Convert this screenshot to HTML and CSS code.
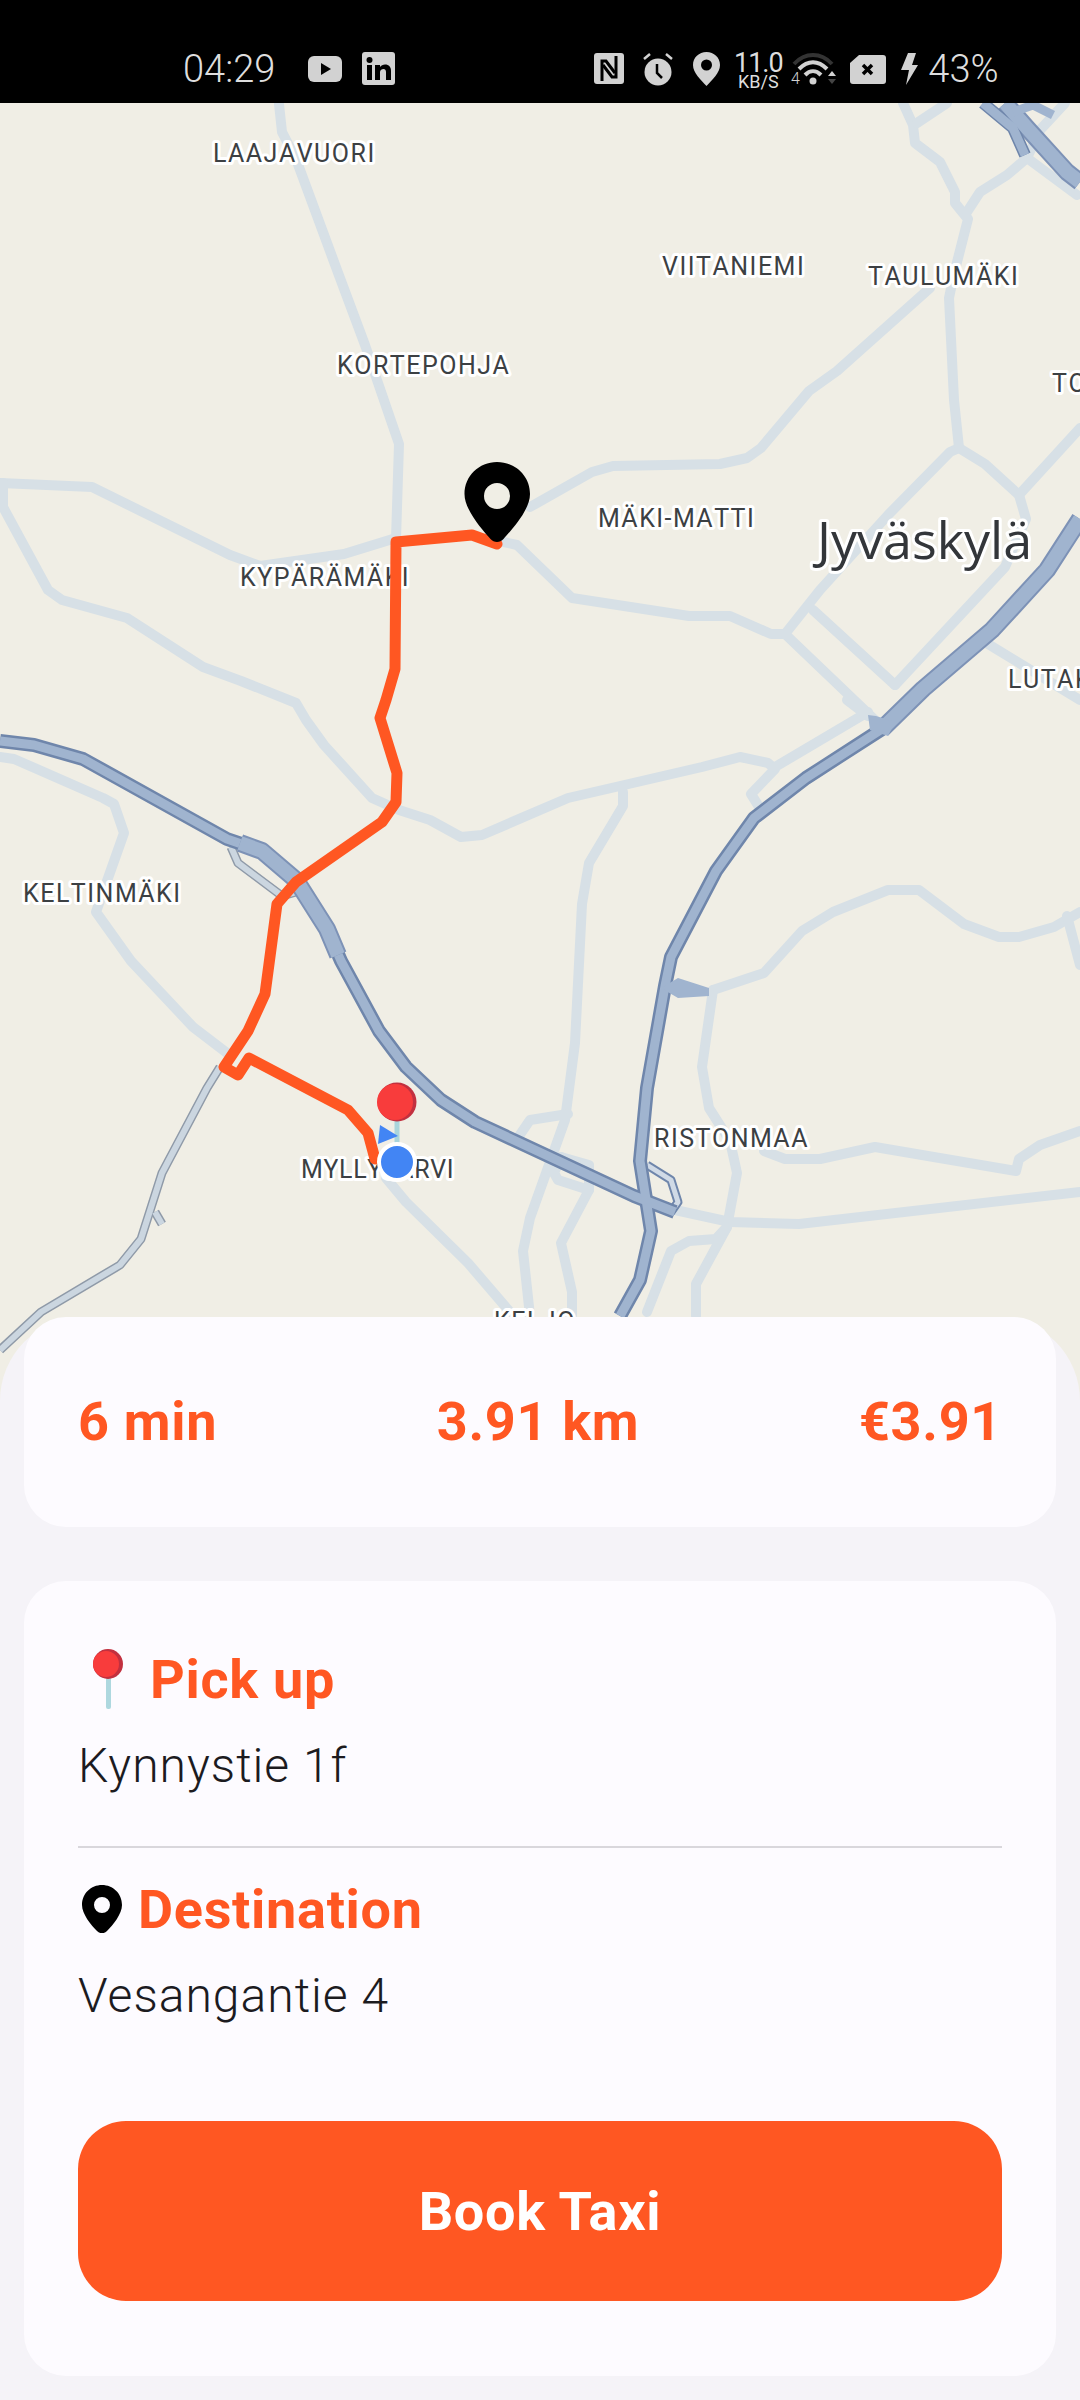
FILE: index.html
```html
<!DOCTYPE html>
<html lang="en">
<head>
  <meta charset="UTF-8" />
  <title>Book Taxi</title>
  <link rel="stylesheet" href="styles.css">
</head>
<body>
  <div class="status-bar">
    <span class="clock">04:29</span>
    <svg class="ic-yt" width="34" height="26" viewBox="0 0 34 26"><rect width="34" height="26" rx="6" fill="#d2d2d2"/><path d="M13 7l10 6-10 6z" fill="#000"/></svg>
    <svg class="ic-in" width="33" height="33" viewBox="0 0 33 33"><rect width="33" height="33" rx="3" fill="#d2d2d2"/><rect x="5" y="13" width="5" height="15" fill="#000"/><circle cx="7.500" cy="8" r="3" fill="#000"/><path d="M13 13h5v2c1-1.500 3-2.500 5-2.500 4 0 6 2.500 6 6.500v9h-5v-8c0-2-1-3-2.500-3s-3.500 1-3.500 3v8h-5z" fill="#000"/></svg>
    <svg class="ic-nfc" width="30" height="31" viewBox="0 0 30 31"><rect width="30" height="31" rx="3" fill="#d2d2d2"/><path d="M8 28V8h4l9 12" fill="none" stroke="#000" stroke-width="3"/><path d="M22 3v21h-4L9 12" fill="none" stroke="#000" stroke-width="3"/></svg>
    <svg class="ic-alarm" width="32" height="34" viewBox="0 0 32 34"><circle cx="16" cy="20" r="13.500" fill="#d2d2d2"/><path d="M15 12v9l5 5" fill="none" stroke="#000" stroke-width="2.500"/><path d="M2 7l6-5M30 7l-6-5" stroke="#d2d2d2" stroke-width="2.500"/></svg>
    <svg class="ic-loc" width="27" height="34" viewBox="0 0 27 34"><path d="M13.500 0C6 0 0 5.500 0 13c0 8 8 15 13.500 21C19 28 27 21 27 13 27 5.500 21 0 13.500 0z" fill="#d2d2d2"/><circle cx="13.500" cy="13" r="5.500" fill="#000"/></svg>
    <div class="speed"><span class="speed-val">11.0</span><span class="speed-unit">KB/S</span></div>
    <svg class="ic-wifi" width="46" height="36" viewBox="0 0 46 36"><path d="M3 14C14 2 30 2 41 14" fill="none" stroke="#333" stroke-width="4"/><path d="M8 19C17 10 27 10 36 19M14 25c5-5 11-5 16 0" fill="none" stroke="#d2d2d2" stroke-width="4"/><circle cx="22" cy="31" r="3.500" fill="#d2d2d2"/><path d="M37 26l4-5 4 5z" fill="#d2d2d2"/><path d="M37 29h8l-4 5z" fill="#444"/><text class="wifi-four" x="0" y="34">4</text></svg>
    <svg class="ic-batt" width="36" height="29" viewBox="0 0 36 29"><path d="M9 0h24a3 3 0 0 1 3 3v23a3 3 0 0 1-3 3H3a3 3 0 0 1-3-3V8z" fill="#d2d2d2"/><path d="M13 10l9 9M22 10l-9 9" stroke="#000" stroke-width="3.500"/></svg>
    <svg class="ic-bolt" width="17" height="32" viewBox="0 0 17 32"><path d="M7 0h8l-4 12h6L5 32l3-15H0z" fill="#d2d2d2"/></svg>
    <span class="batt-pct">43%</span>
  </div>

  <div class="map">
    <svg width="1080" height="1320" viewBox="0 103 1080 1320">
      <g class="road">
        <polyline points="279,104 282,132 296,159 337,270 365,345 399,444 396,539"/>
        <polyline points="0,483 92,487 230,555 260,566 344,554 396,538"/>
        <polyline points="3,483 3,507 48,590 62,600 127,618 203,667 241,681 296,703 306,720 324,745 372,798 399,810 430,820 461,837 482,835 568,798 620,786 702,767 740,757 768,763 775,769 751,794 761,810"/>
        <polyline points="775,767 868,712"/>
        <polyline points="847,700 868,716"/>
        <polyline points="530,507 592,472 613,466 720,464 747,458 761,448 809,391 837,371 930,288"/>
        <polyline points="903,103 913,125 915,143 940,162 955,192 955,203 968,219 954,274 949,298 954,400 959,448"/>
        <polyline points="917,123 947,103"/>
        <polyline points="967,212 980,192 1007,175 1027,158 1077,195"/>
        <polyline points="1027,158 1040,130 1065,103"/>
        <polyline points="959,448 950,452 888,515 820,590 785,634 771,634 730,616 689,616 572,598 517,545 499,541"/>
        <polyline points="959,448 985,464 1019,495 1026,519 1005,567 895,685"/>
        <polyline points="1019,495 1080,428"/>
        <polyline points="785,634 875,720"/>
        <polyline points="813,610 895,685"/>
        <polyline points="988,644 1080,700"/>
        <polyline points="0,757 14,759 103,798 114,804 124,833 96,912 131,961 193,1027 227,1053"/>
        <polyline points="386,1178 406,1202 468,1263 510,1312"/>
        <polyline points="623,792 623,806 589,863 582,904 575,1043 565,1120 530,1218 523,1251 530,1316"/>
        <polyline points="517,1139 530,1120 568,1114"/>
        <polyline points="561,1157 589,1165 589,1190 561,1243 572,1292 572,1316"/>
        <polyline points="561,1157 554,1173 558,1180 589,1190"/>
        <polyline points="713,990 702,1067 709,1108 730,1141 737,1173 727,1227 696,1284 696,1316"/>
        <polyline points="713,990 764,973 802,931 833,912 888,890 919,890 964,924 999,937 1019,937 1054,927 1080,912"/>
        <polyline points="1067,916 1080,965"/>
        <polyline points="675,1210 730,1222 799,1224 1080,1192"/>
        <polyline points="764,1151 785,1159 820,1159 875,1147 1016,1171 1019,1159 1040,1145 1080,1131"/>
        <polyline points="727,1227 716,1239 689,1241 671,1251 647,1312"/>
      </g>
      <g class="link-edge">
        <polyline points="220,1067 207,1088 162,1173 141,1239 120,1265 41,1312 0,1350"/>
        <polyline points="155,1212 162,1224"/>
        <polyline points="231,847 238,863 282,896 296,892"/>
      </g>
      <g class="link-fill">
        <polyline points="220,1067 207,1088 162,1173 141,1239 120,1265 41,1312 0,1350"/>
        <polyline points="155,1212 162,1224"/>
        <polyline points="231,847 238,863 282,896 296,892"/>
      </g>
      <polyline class="ramp-edge" points="647,1165 671,1180 678,1202 671,1212 640,1196"/>
      <polyline class="ramp-fill" points="647,1165 671,1180 678,1202 671,1212 640,1196"/>
      <g class="hw-edge">
        <polyline points="0,741 34,745 83,759 227,839 262,851 296,880 327,929 341,961 379,1031 406,1067 441,1100 475,1122 634,1196 675,1212"/>
        <polyline points="882,729 806,778 754,818 716,871 671,957 665,986 647,1088 640,1161 651,1231 640,1280 620,1316"/>
      </g>
      <g class="hw-fill">
        <polyline points="0,741 34,745 83,759 227,839 262,851 296,880 327,929 341,961 379,1031 406,1067 441,1100 475,1122 634,1196 675,1212"/>
        <polyline points="882,729 806,778 754,818 716,871 671,957 665,986 647,1088 640,1161 651,1231 640,1280 620,1316"/>
      </g>
      <g class="hw-wide-edge">
        <polyline points="1080,519 1047,570 992,630 923,689 882,729"/>
        <polyline points="240,843 262,851 296,880 327,929 338,955"/>
        <polyline points="1005,103 1027,128 1067,172 1080,182"/>
      </g>
      <g class="hw-narrow-edge">
        <polyline points="983,103 1013,128 1025,155"/>
      </g>
      <g class="hw-wide-fill">
        <polyline points="1080,519 1047,570 992,630 923,689 882,729"/>
        <polyline points="240,843 262,851 296,880 327,929 338,955"/>
        <polyline points="1005,103 1027,128 1067,172 1080,182"/>
      </g>
      <g class="hw-narrow-fill">
        <polyline points="983,103 1013,128 1025,155"/>
        <polyline points="1013,112 1033,105 1053,115"/>
      </g>
      <path class="hw-blob" d="M678 978l31 10v8l-31 2-17-10z"/>
      <path class="hw-blob" d="M868 715l8 1 19 6-7 14-18-6z"/>

      <text class="lbl" x="213" y="162">LAAJAVUORI</text>
      <text class="lbl" x="662" y="275">VIITANIEMI</text>
      <text class="lbl" x="868" y="285">TAULUMÄKI</text>
      <text class="lbl" x="337" y="374">KORTEPOHJA</text>
      <text class="lbl" x="598" y="527">MÄKI-MATTI</text>
      <text class="lbl" x="240" y="586">KYPÄRÄMÄKI</text>
      <text class="lbl" x="1052" y="392">TOIVOLA</text>
      <text class="lbl" x="1008" y="688">LUTAKKO</text>
      <text class="lbl" x="23" y="902">KELTINMÄKI</text>
      <text class="lbl" x="301" y="1178" textLength="154">MYLLYJÄRVI</text>
      <text class="lbl" x="654" y="1147">RISTONMAA</text>
      <text class="lbl" x="494" y="1330">KELJO</text>
      <text class="lbl-city" x="817" y="559">Jyväskylä</text>

      <polyline class="route" points="497,544 472,535 396,542 395,669 386,700 380,718 397,773 396,802 382,822 296,882 277,904 265,994 248,1031 224,1067 238,1075 249,1058 348,1110 368,1133 375,1159"/>

      <path class="pin-black" fill-rule="evenodd" d="M497 462c-18 0-32.500 14-32.500 32 0 16 18 36 26 45 3.500 4 9.500 4 13 0 8-9 26.500-29 26.500-45 0-18-14.500-32-33-32zm0 21a13 13 0 1 1 0 26 13 13 0 0 1 0-26z"/>

      <rect class="pick-stick" x="394.500" y="1120" width="5" height="26"/>
      <path class="arrow" d="M380 1125l18 11-20 8z"/>
      <circle class="pick-shade" cx="397" cy="1102" r="19.500"/>
      <circle class="pick-ball" cx="395" cy="1102" r="18"/>
      <circle class="dot" cx="397" cy="1162" r="18"/>
    </svg>
  </div>

  <div class="sheet">
    <div class="card stats">
      <span>6 min</span>
      <span>3.91 km</span>
      <span>€3.91</span>
    </div>

    <div class="card details">
      <div class="place">
        <div class="place-title pickup">
          <svg width="30" height="60" viewBox="0 0 30 60"><rect x="13" y="27" width="5" height="33" rx="2" fill="#aed8df"/><circle cx="15" cy="15" r="15" fill="#c2303f"/><circle cx="13" cy="15" r="13" fill="#f83c3c"/></svg>
          <span>Pick up</span>
        </div>
        <div class="place-addr">Kynnystie 1f</div>
      </div>
      <div class="divider"></div>
      <div class="place">
        <div class="place-title dest">
          <svg width="40" height="48" viewBox="0 0 40 48"><path fill-rule="evenodd" d="M20 0C9 0 0 8.500 0 20c0 9 9 20 15 26 3 3 7 3 10 0 6-6 15-17 15-26C40 8.500 31 0 20 0zm0 12a8 8 0 1 1 0 16 8 8 0 0 1 0-16z" fill="#000"/></svg>
          <span>Destination</span>
        </div>
        <div class="place-addr">Vesangantie 4</div>
      </div>
      <button class="book-btn" type="button">Book Taxi</button>
    </div>
  </div>
</body>
</html>
```

FILE: styles.css
```css
* {
  box-sizing: border-box;
}
body {
  margin: 0;
  width: 1080px;
  height: 2400px;
  overflow: hidden;
  background: #f5f3f8;
  font-family: Roboto, 'Noto Sans', sans-serif;
}

/* status bar */
.status-bar {
  height: 103px;
  background: #000;
  color: #dedede;
  display: flex;
  align-items: flex-start;
  padding-top: 50px;
  padding-left: 183px;
  font-weight: 300;
}
.clock, .batt-pct {
  font-size: 38px;
  line-height: 38px;
}
.ic-yt { margin: 6px 0 0 33px; }
.ic-in { margin: 2px 0 0 20px; }
.ic-nfc { margin: 3px 0 0 199px; }
.ic-alarm { margin: 2px 0 0 18px; }
.ic-loc { margin: 2px 0 0 19px; }
.speed {
  margin: 1px 0 0 16px;
  width: 44px;
  display: flex;
  flex-direction: column;
  align-items: center;
  font-weight: 400;
}
.speed-val {
  font-size: 27px;
  line-height: 24px;
  letter-spacing: -1px;
}
.speed-unit {
  font-size: 18px;
  line-height: 14px;
}
.ic-wifi { margin: 0 0 0 11px; }
.ic-batt { margin: 5px 0 0 13px; }
.ic-bolt { margin: 3px 0 0 15px; }
.batt-pct { margin-left: 10px; }
.wifi-four {
  font-size: 16px;
  fill: #d2d2d2;
}

/* map */
.map {
  height: 1320px;
  background: #f0eee5;
  overflow: hidden;
}
.map svg {
  display: block;
}
.map polyline {
  fill: none;
  stroke-linejoin: round;
}
.road polyline {
  stroke: #d7e0e6;
  stroke-width: 10;
  stroke-linecap: round;
}
.link-edge polyline {
  stroke: #8f9aa8;
  stroke-width: 9;
}
.link-fill polyline {
  stroke: #cbd6e0;
  stroke-width: 6;
}
.map .ramp-edge {
  stroke: #6f86ab;
  stroke-width: 9;
}
.map .ramp-fill {
  stroke: #d0dae6;
  stroke-width: 5;
}
.hw-edge polyline {
  stroke: #6f86ab;
  stroke-width: 14;
}
.hw-fill polyline {
  stroke: #a0b4cf;
  stroke-width: 9;
}
.hw-wide-edge polyline {
  stroke: #7d92b6;
  stroke-width: 18;
}
.hw-wide-fill polyline {
  stroke: #a0b4cf;
  stroke-width: 14;
}
.hw-narrow-edge polyline {
  stroke: #6f86ab;
  stroke-width: 12;
}
.hw-narrow-fill polyline {
  stroke: #a0b4cf;
  stroke-width: 9;
}
.hw-blob {
  fill: #a0b4cf;
}
.lbl {
  font-family: Roboto, sans-serif;
  font-size: 25px;
  letter-spacing: 1.500px;
  font-kerning: none;
  fill: #3c4043;
  stroke: #fff;
  stroke-width: 6px;
  stroke-linejoin: round;
  paint-order: stroke;
}
.lbl-city {
  font-family: 'Open Sans', sans-serif;
  font-size: 52px;
  fill: #33363a;
  stroke: #fff;
  stroke-width: 6px;
  stroke-linejoin: round;
  paint-order: stroke;
}
.map .route {
  stroke: #ff5722;
  stroke-width: 11;
  stroke-linecap: round;
}
.pin-black {
  fill: #000;
}
.pick-stick {
  fill: #a9d5dc;
}
.arrow {
  fill: #4285f4;
}
.pick-shade {
  fill: #c2303f;
}
.pick-ball {
  fill: #f83c3c;
}
.dot {
  fill: #4285f4;
  stroke: #fff;
  stroke-width: 4;
}

/* bottom sheet */
.sheet {
  position: relative;
  margin-top: -106px;
  height: 1083px;
  padding: 0 24px;
  background: #f5f3f8;
  border-radius: 84px 84px 0 0;
}
.card {
  background: #fdfbff;
  border-radius: 42px;
}
.stats {
  height: 210px;
  padding: 0 54px 2px;
  display: flex;
  justify-content: space-between;
  align-items: center;
  color: #ff5722;
  font-size: 54px;
  font-weight: 700;
  letter-spacing: 0.700px;
}
.details {
  height: 795px;
  margin-top: 54px;
  padding: 62px 54px 0;
  display: flex;
  flex-direction: column;
}
.place-title {
  display: flex;
  align-items: center;
  height: 72px;
  color: #ff5722;
  font-size: 54px;
  font-weight: 700;
  letter-spacing: 0.700px;
}
.pickup {
  gap: 27px;
  padding-left: 15px;
}
.dest {
  gap: 16px;
  padding-left: 4px;
}
.place-addr {
  margin-top: 21px;
  font-size: 48px;
  font-weight: 300;
  line-height: 60px;
  letter-spacing: 1px;
  color: #1c1b1f;
}
.divider {
  height: 2px;
  margin: 50px 0 25px;
  background: #d9d7dc;
}
.book-btn {
  margin-top: auto;
  margin-bottom: 75px;
  width: 100%;
  height: 180px;
  border: none;
  border-radius: 48px;
  background: #ff5722;
  color: #fff;
  font-family: inherit;
  font-size: 54px;
  font-weight: 700;
  letter-spacing: 0.700px;
}
```
